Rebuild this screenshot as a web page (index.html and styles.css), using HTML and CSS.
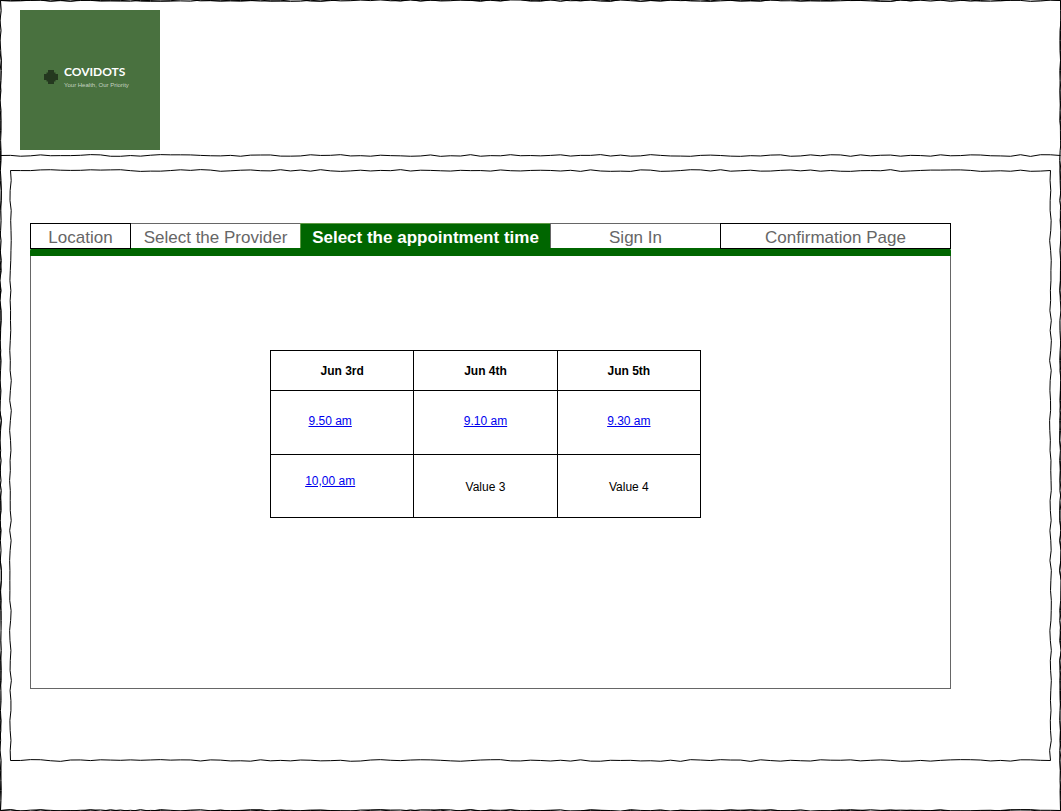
FILE: index.html
```html
<!DOCTYPE html>
<html lang="en">
<head>
<meta charset="utf-8">
<meta name="viewport" content="width=device-width, initial-scale=1">
<title>Covidots - Select the appointment time</title>
<link rel="stylesheet" href="styles.css">
</head>
<body>
<div class="page sketch" data-passes="2" data-seed="7">
  <header class="header">
    <div class="logo">
      <svg class="logo-cross" viewBox="0 0 14 14" aria-hidden="true">
        <path d="M4 0h6v2.500h1.500V4H14v6h-2.500v1.500H10V14H4v-2.500H2.500V10H0V4h2.500V2.500H4z"/>
      </svg>
      <div class="logo-text">
        <span class="logo-name">COVIDOTS</span>
        <span class="logo-tagline">Your Health, Our Priority</span>
      </div>
    </div>
    <div class="header-rule sketch-line" data-passes="1" data-seed="23"></div>
  </header>
  <main class="panel sketch" data-passes="1" data-seed="41">
    <nav class="tabs" aria-label="Booking steps">
      <button class="tab tab-boxed" type="button">Location</button>
      <button class="tab" type="button">Select the Provider</button>
      <button class="tab tab-active" type="button" aria-current="step">Select the appointment time</button>
      <button class="tab tab-divided" type="button">Sign In</button>
      <button class="tab tab-boxed" type="button">Confirmation Page</button>
    </nav>
    <div class="tab-bar"></div>
    <section class="content">
      <table class="slots">
        <thead>
          <tr><th scope="col">Jun 3rd</th><th scope="col">Jun 4th</th><th scope="col">Jun 5th</th></tr>
        </thead>
        <tbody>
          <tr class="slots-first">
            <td class="slot-left"><a href="#">9.50 am</a></td>
            <td><a href="#">9.10 am</a></td>
            <td><a href="#">9.30 am</a></td>
          </tr>
          <tr class="slots-last">
            <td class="slot-left slot-raised"><a href="#">10,00 am</a></td>
            <td>Value 3</td>
            <td>Value 4</td>
          </tr>
        </tbody>
      </table>
    </section>
  </main>
</div>
<script src="sketch.js"></script>
</body>
</html>
```
FILE: styles.css
```css
* {
  box-sizing: border-box;
}

body {
  margin: 0;
  background: #fff;
  color: #000;
  font-family: "Liberation Sans", Arial, sans-serif;
  font-size: 12px;
}

.page {
  position: relative;
  min-height: 100vh;
  padding-bottom: 50px;
}

/* Hand-drawn outlines, filled in by sketch.js */
.sketch-svg {
  position: absolute;
  inset: 0;
  width: 100%;
  height: 100%;
  overflow: visible;
  pointer-events: none;
  fill: none;
  stroke: #000;
  stroke-width: 1;
}

.header {
  padding: 10px 0 5px;
}

.header-rule {
  position: relative;
  height: 1px;
  margin-top: 5px;
  margin-bottom: -6px;
}

.logo {
  display: flex;
  align-items: center;
  gap: 6px;
  width: 140px;
  height: 140px;
  margin-left: 20px;
  padding: 0 0 6px 24px;
  background: #49713f;
}

.logo-cross {
  flex: none;
  width: 14px;
  height: 14px;
  fill: #24381f;
}

.logo-text {
  display: flex;
  flex-direction: column;
  padding-top: 2px;
  color: #fff;
  font-family: Lato, sans-serif;
  white-space: nowrap;
}

.logo-name {
  font-size: 12px;
  font-weight: 700;
  line-height: 14px;
}

.logo-tagline {
  color: #c5d2c1;
  font-family: "Liberation Sans", Arial, sans-serif;
  font-size: 6px;
  line-height: 12px;
}

.panel {
  position: relative;
  margin: 15px 10px 0;
  padding: 53px 100px 72px 20px;
}

.tabs {
  display: grid;
  grid-template-columns: 101fr 169fr 250fr 170fr 231fr;
  grid-template-rows: 25px;
}

.tab {
  min-width: 0;
  margin: 0;
  padding: 3px 0 0;
  border: 0 solid #666;
  border-top-width: 1px;
  background: #fff;
  color: #666;
  font: 17px/21px "Liberation Sans", Arial, sans-serif;
  white-space: nowrap;
}

.tab-boxed {
  z-index: 1;
  height: 26px;
  border: 1px solid #000;
}

.tab-divided {
  border-left-width: 1px;
}

.tab-active {
  border-color: #5f9a45;
  border-left-width: 1px;
  background: #060;
  color: #fff;
  font-weight: 700;
}

.tab-bar {
  height: 8px;
  border-radius: 3px 3px 0 0;
  background: #060;
}

.content {
  padding: 94px 249px 170px 239px;
  border: 1px solid #666;
  border-top: 0;
}

.slots {
  width: 100%;
  border-collapse: collapse;
  table-layout: fixed;
}

.slots th,
.slots td {
  height: 64px;
  padding: 0;
  border: 1px solid #000;
  text-align: center;
  vertical-align: middle;
}

.slots th {
  height: 40px;
}

.slots-first td {
  padding-bottom: 4px;
}

.slots-last td {
  height: 63px;
  padding-top: 2px;
}

.slots .slot-left {
  padding-right: 24px;
}

.slots .slot-raised {
  padding-bottom: 12px;
}

.slots a {
  color: #00e;
}
```
FILE: sketch.js
```js
(function () {
  var NS = "http://www.w3.org/2000/svg";
  var STEP = 10;

  function makeRandom(seed) {
    var s = seed;
    return function () {
      s = (s * 16807) % 2147483647;
      return s / 2147483647;
    };
  }

  function edge(x1, y1, x2, y2, random) {
    var length = Math.max(Math.abs(x2 - x1), Math.abs(y2 - y1));
    var count = Math.max(1, Math.round(length / STEP));
    var horizontal = y1 === y2;
    var d = "M" + x1 + " " + y1;
    for (var i = 1; i <= count; i++) {
      var wobble = i === count ? 0 : (random() - 0.5) * 1.8;
      var x = x1 + (x2 - x1) * i / count + (horizontal ? 0 : wobble);
      var y = y1 + (y2 - y1) * i / count + (horizontal ? wobble : 0);
      d += "L" + x.toFixed(2) + " " + y.toFixed(2);
    }
    return d;
  }

  function draw(el, lineOnly) {
    var old = el.querySelector(":scope > .sketch-svg");
    if (old) old.remove();
    var random = makeRandom(Number(el.dataset.seed) * 7919);
    var w = el.clientWidth - 0.5;
    var h = el.clientHeight - 0.5;
    var svg = document.createElementNS(NS, "svg");
    svg.setAttribute("class", "sketch-svg");
    svg.setAttribute("aria-hidden", "true");
    for (var p = 0; p < Number(el.dataset.passes); p++) {
      var d = edge(0.5, 0.5, w, 0.5, random);
      if (!lineOnly) {
        d += edge(w, 0.5, w, h, random) + edge(w, h, 0.5, h, random) + edge(0.5, h, 0.5, 0.5, random);
      }
      var path = document.createElementNS(NS, "path");
      path.setAttribute("d", d);
      svg.appendChild(path);
    }
    el.appendChild(svg);
  }

  function drawAll() {
    document.querySelectorAll(".sketch").forEach(function (el) { draw(el, false); });
    document.querySelectorAll(".sketch-line").forEach(function (el) { draw(el, true); });
  }

  drawAll();
  window.addEventListener("resize", drawAll);
})();
```
